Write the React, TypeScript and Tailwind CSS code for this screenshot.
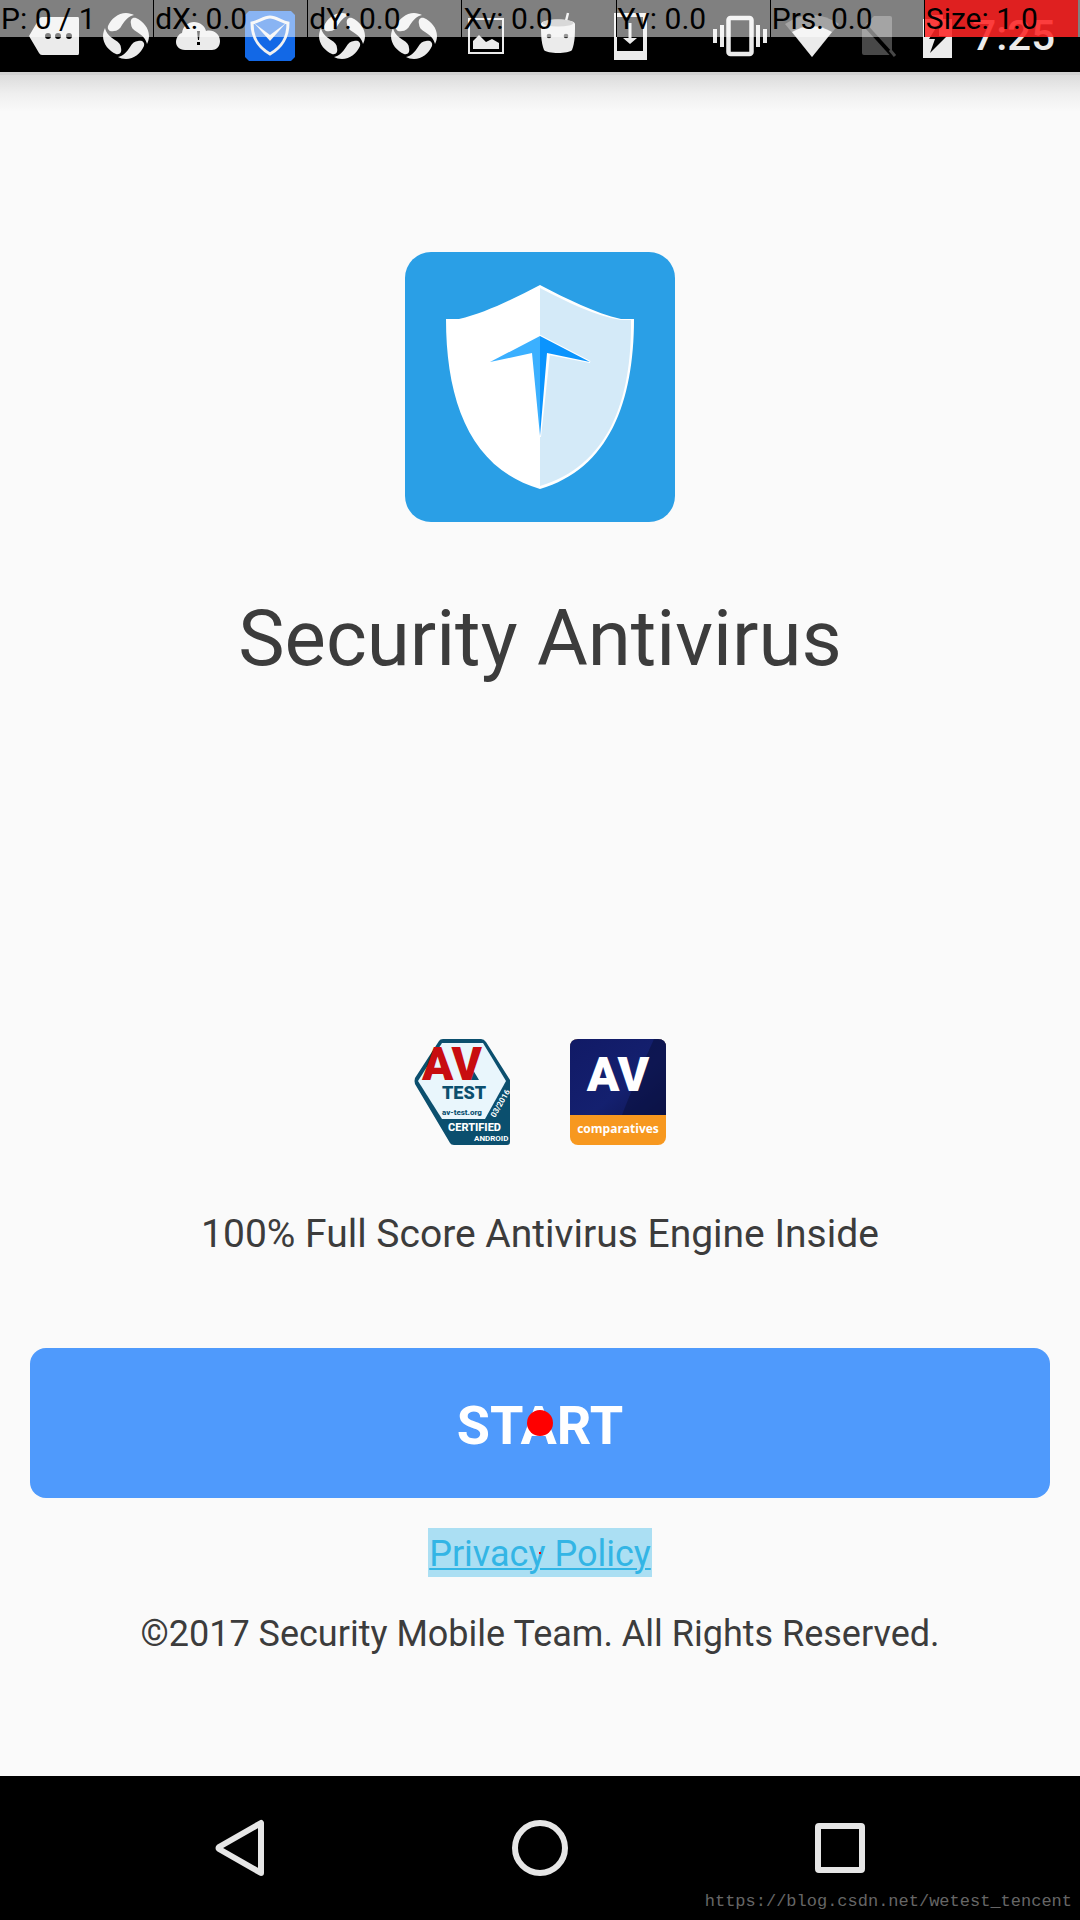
import React from 'react';

const POINTER_CELLS = ['P: 0 / 1', 'dX: 0.0', 'dY: 0.0', 'Xv: 0.0', 'Yv: 0.0', 'Prs: 0.0'];

const MessageIcon = () => (
  <svg className="size-[72px]" viewBox="0 0 72 72" aria-hidden="true">
    <path d="M11 36 21 19Q22 17 24 17H60Q61 17 61 19V53Q61 55 60 55H24Q22 55 21 53Z" fill="#ebebeb" />
    <g fill="#000">
      <circle cx="30" cy="36" r="3" />
      <circle cx="40" cy="36" r="3" />
      <circle cx="51" cy="36" r="3" />
    </g>
  </svg>
);

const BLADE = 'M-18-10C-15-17-8-23 0-23C3-23 6-22 8-21C3-20-1-16-4-11C-6-7-9-5-12-5C-16-4-19-6-18-10Z';

const SwirlIcon = () => (
  <svg className="size-[72px]" viewBox="0 0 72 72" aria-hidden="true">
    <g transform="translate(36 36)" fill="#ebebeb">
      {[0, 90, 180, 270].map((angle) => (
        <path key={angle} d={BLADE} transform={`rotate(${angle})`} />
      ))}
    </g>
  </svg>
);

const CloudAlertIcon = () => (
  <svg className="size-[72px]" viewBox="0 0 72 72" aria-hidden="true">
    <path d="M23 50C17 50 14 46 14 42C14 37 18 33 20 33C21 26 26 22 32 22C38 22 43 26 44 31C51 29 58 34 58 41C58 47 54 50 50 50Z" fill="#ebebeb" />
    <path d="M35 31H38L37 40H36ZM35 42H38V45H35Z" fill="#000" />
  </svg>
);

const ManagerIcon = () => (
  <svg className="size-[72px]" viewBox="0 0 72 72" aria-hidden="true">
    <path d="M15 11H57L61 15V57L57 61H15L11 57V15Z" fill="#1268e6" />
    <path d="M18 23C24 22 30 17 36 17C42 17 48 22 54 23C54 38 48 47 36 54C24 47 18 38 18 23Z" fill="none" stroke="#f0f0f0" strokeWidth="3" />
    <path d="M20 23 36 35 52 23 36 41Z" fill="#f0f0f0" />
  </svg>
);

const PictureIcon = () => (
  <svg className="size-[72px]" viewBox="0 0 72 72" aria-hidden="true">
    <rect x="19" y="19" width="34" height="34" fill="none" stroke="#ebebeb" strokeWidth="2" />
    <path d="M23 49V41L29 35 36 42 42 39 49 43V49Z" fill="#ebebeb" />
  </svg>
);

const AndroidIcon = () => (
  <svg className="size-[72px]" viewBox="0 0 72 72" aria-hidden="true">
    <path d="M44 21 46 13" stroke="#ebebeb" strokeWidth="2.5" />
    <path d="M19 24C19 18 53 18 53 24C53 34 53 42 50 50C47 54 25 54 22 50C19 42 19 34 19 24Z" fill="#ebebeb" />
    <ellipse cx="36" cy="23" rx="15.5" ry="3.5" fill="#b0b0b0" />
    <circle cx="27" cy="36" r="2.3" fill="#333" />
    <circle cx="44" cy="36" r="2.3" fill="#333" />
  </svg>
);

const DownloadIcon = () => (
  <svg className="size-[72px]" viewBox="0 0 72 72" aria-hidden="true">
    <path d="M20 13H53V60H20ZM23 17V51H49V17Z" fill="#ebebeb" fillRule="evenodd" />
    <path d="M34.5 23H37.5V38H43L36 44 29 38H34.5Z" fill="#ebebeb" />
  </svg>
);

const VibrateIcon = () => (
  <svg className="size-[72px]" viewBox="0 0 72 72" aria-hidden="true">
    <rect x="24.5" y="18" width="23" height="36" rx="2" fill="none" stroke="#ebebeb" strokeWidth="4.5" />
    <path d="M9 29H13V43H9ZM16 25H20V47H16ZM52 25H56V47H52ZM59 29H63V43H59Z" fill="#ebebeb" />
  </svg>
);

const WifiIcon = () => (
  <svg className="size-[72px]" viewBox="0 0 72 72" aria-hidden="true">
    <path d="M36 57 9 24Q36 6 63 24Z" fill="#484848" />
    <path d="M36 57 16 32Q36 20 56 32Z" fill="#ebebeb" />
  </svg>
);

const NoSimIcon = () => (
  <svg className="h-[72px] w-[62px]" viewBox="0 0 62 72" aria-hidden="true">
    <path d="M26 16H42Q44 16 44 18V53Q44 55 42 55H16Q14 55 14 53V28Z" fill="#484848" />
    <path d="M17 25 46 57" stroke="#000" strokeWidth="4" />
    <path d="M42 50 47 56" stroke="#484848" strokeWidth="3" />
  </svg>
);

const BatteryIcon = () => (
  <svg className="h-[72px] w-[54px]" viewBox="0 0 54 72" aria-hidden="true">
    <path d="M13 19H22V15H33V19H42V58H13Z" fill="#ebebeb" />
    <path d="M29 23 19 39H25L20 53 37 36H29Z" fill="#000" />
  </svg>
);

const StatusBar = () => (
  <header className="relative bg-black">
    <div className="flex justify-between pl-[18px] pr-[25px]">
      <div className="flex">
        <MessageIcon />
        <SwirlIcon />
        <CloudAlertIcon />
        <ManagerIcon />
        <SwirlIcon />
        <SwirlIcon />
        <PictureIcon />
        <AndroidIcon />
        <DownloadIcon />
      </div>
      <div className="flex items-center">
        <VibrateIcon />
        <WifiIcon />
        <NoSimIcon />
        <BatteryIcon />
        <time className="pl-2 text-[42px] leading-[72px] font-medium text-[#ebebeb]">7:25</time>
      </div>
    </div>
    {/* pointer location readout, drawn over the status icons */}
    <div className="absolute inset-x-0 top-0 flex h-[37px] bg-white/50 pr-[2px] text-[30px] leading-[37px] text-black">
      {POINTER_CELLS.map((cell) => (
        <span key={cell} className="flex-1 border-r border-black pl-px whitespace-nowrap">
          {cell}
        </span>
      ))}
      <span className="flex-1 bg-[#ff0000]/75 pl-px whitespace-nowrap">Size: 1.0</span>
    </div>
  </header>
);

const AppLogo = () => (
  <svg className="size-[270px]" viewBox="0 0 270 270" role="img" aria-label="Security Antivirus">
    <rect width="270" height="270" rx="26" fill="#2a9fe6" />
    <path d="M135 33C108 47 80 61 54 67H41C41 150 66 217 135 237C204 217 229 150 229 67H216C190 61 162 47 135 33Z" fill="#fff" />
    <path d="M135 36C162 50 190 64 216 68H226C227 149 203 214 135 234Z" fill="#d4eaf8" />
    <path d="M135 84 185 110 144 102 135 185Z" fill="#fff" stroke="#fff" strokeWidth="2" />
    <path d="M135 84 85 110 127 101 135 184Z" fill="#3bb0ff" />
    <path d="M135 84 185 110 142 101 135 184Z" fill="#0b94fd" />
  </svg>
);

const AvTestBadge = () => (
  <svg className="h-[106px] w-24" viewBox="0 0 96 106" role="img" aria-label="AV-TEST certified">
    <path d="M25 2Q26 0 29 0H67Q70 0 72 3L96 41V103Q96 106 93 106H40Q37 106 36 104L1 45Q0 42 1 39Z" fill="#0b4f6e" />
    <path d="M28 4H69L92 42 71 80H28L4 42Z" fill="#e9f6fc" />
    <g fontFamily="Roboto, sans-serif" fontWeight="800">
      <path d="M59 31 65 41H53Z" fill="#0b4f6e" />
      <text x="8" y="41" fontSize="46" fontWeight="900" fill="#c80d10">AV</text>
      <text x="28" y="60" fontSize="18" fontWeight="900" fill="#0b4f6e">TEST</text>
      <text x="28" y="76" fontSize="8" fill="#0b4f6e">av-test.org</text>
      <text x="34" y="92" fontSize="11" fill="#fff">CERTIFIED</text>
      <text x="60" y="102" fontSize="8" fontWeight="700" fill="#fff">ANDROID</text>
      <text transform="translate(81 79) rotate(-60)" fontSize="8" fontWeight="700" fill="#fff">03/2016</text>
    </g>
  </svg>
);

const AvComparativesBadge = () => (
  <svg className="h-[106px] w-24" viewBox="0 0 96 106" role="img" aria-label="AV comparatives">
    <defs>
      <linearGradient id="navy" x1="0" y1="0" x2="1" y2="1">
        <stop offset="0" stopColor="#111a66" />
        <stop offset="0.6" stopColor="#14206f" />
        <stop offset="1" stopColor="#0e1550" />
      </linearGradient>
    </defs>
    <rect width="96" height="106" rx="8" fill="#f7981f" />
    <path d="M0 8Q0 0 8 0H88Q96 0 96 8V76H0Z" fill="url(#navy)" />
    <path d="M84 0H88Q96 0 96 8V76H52Q66 40 84 0Z" fill="#0a103f" opacity="0.6" />
    <g fill="#fff" textAnchor="middle">
      <text x="48" y="52" fontSize="48" fontFamily="Roboto, sans-serif" fontWeight="900">AV</text>
      <text x="48" y="94" fontSize="12" fontFamily="Open Sans, sans-serif" fontWeight="700">comparatives</text>
    </g>
  </svg>
);

const NavigationBar = () => (
  <footer className="relative bg-black">
    <nav className="flex justify-center px-[90px]">
      <button type="button" aria-label="Back" className="flex h-36 flex-1 items-center justify-center">
        <svg className="size-[60px]" viewBox="0 0 60 60" fill="none" stroke="#e6e6e6" strokeWidth="6" strokeLinejoin="round">
          <path d="M51 5V55L9 31Q8 30 9 29Z" />
        </svg>
      </button>
      <button type="button" aria-label="Home" className="flex h-36 flex-1 items-center justify-center">
        <svg className="size-[60px]" viewBox="0 0 60 60" fill="none" stroke="#e6e6e6" strokeWidth="6">
          <circle cx="30" cy="30" r="25" />
        </svg>
      </button>
      <button type="button" aria-label="Recent apps" className="flex h-36 flex-1 items-center justify-center">
        <svg className="size-[60px]" viewBox="0 0 60 60" fill="none" stroke="#e6e6e6" strokeWidth="6">
          <rect x="8" y="8" width="44" height="44" rx="1" />
        </svg>
      </button>
    </nav>
    <span className="absolute right-2 bottom-1.5 font-['Liberation_Mono',monospace] text-[17px] leading-6 text-[#666666]">
      https://blog.csdn.net/wetest_tencent
    </span>
  </footer>
);

export default function App() {
  return (
    <div className="flex min-h-screen flex-col bg-[#fafafa] font-[Roboto,sans-serif] text-[#3c3c3c]">
      <StatusBar />
      <div className="h-10 border-t-[3px] border-[#d2d2d2] bg-linear-to-b from-[#dcdcdc] via-[#efefef] to-[#fafafa]" />

      <main className="flex flex-1 flex-col items-center px-[30px] pt-[140px] pb-[118px]">
        <AppLogo />
        <h1 className="mt-[69px] text-[78px] leading-[96px]">Security Antivirus</h1>

        <div className="mt-auto flex gap-[60px]">
          <AvTestBadge />
          <AvComparativesBadge />
        </div>
        <p className="mt-[65px] text-[39px] leading-[48px]">100% Full Score Antivirus Engine Inside</p>

        <div className="relative mt-[90px] w-full">
          <button type="button" className="h-[150px] w-full rounded-2xl bg-[#4f9afc] pt-1 text-[54px] font-bold text-white">
            START
          </button>
          {/* last touch position */}
          <span className="pointer-events-none absolute top-1/2 left-1/2 size-[26px] -translate-1/2 rounded-full bg-[#ff0000]" />
        </div>

        <a href="#privacy" className="relative mt-[30px] bg-[#abdff3] px-px pt-1 text-[36px] leading-[45px] text-[#33b5e5] underline decoration-2 underline-offset-2">
          Privacy Policy
          <span className="absolute top-1/2 left-1/2 size-[2px] -translate-1/2 bg-[#ff0000]" />
        </a>
        <p className="mt-[33px] text-[36px] leading-[48px]">©2017 Security Mobile Team. All Rights Reserved.</p>
      </main>

      <NavigationBar />
    </div>
  );
}
